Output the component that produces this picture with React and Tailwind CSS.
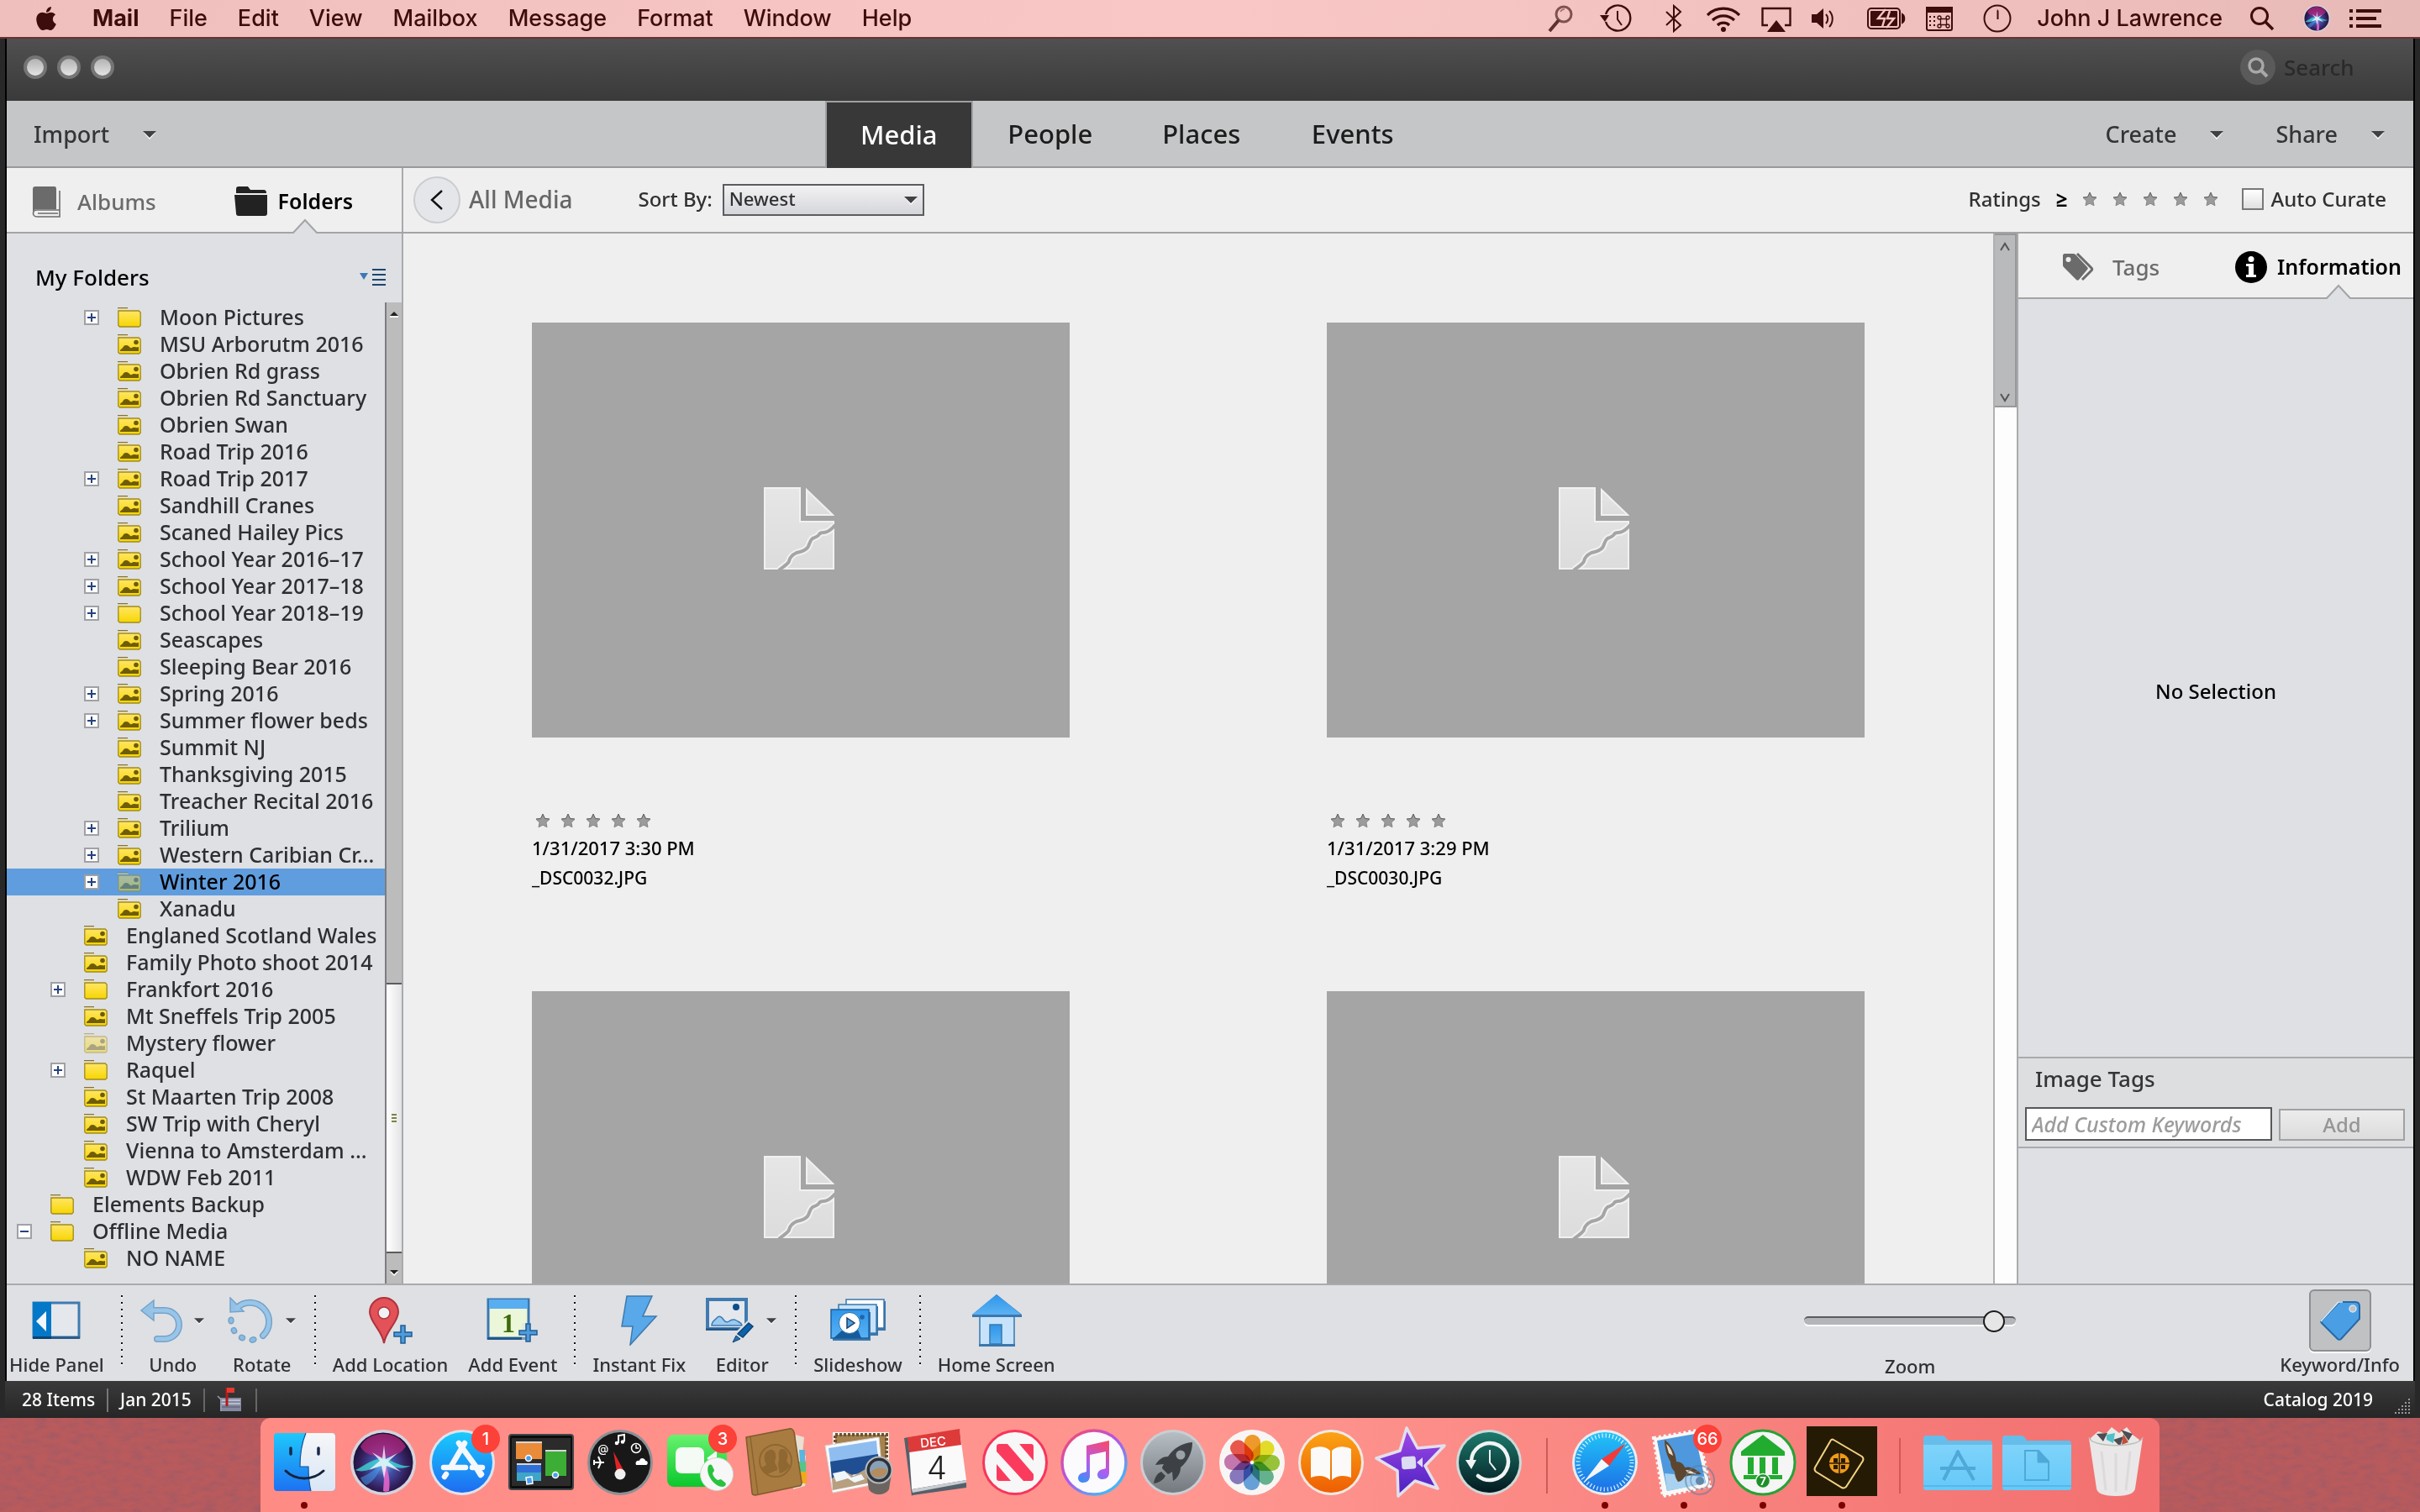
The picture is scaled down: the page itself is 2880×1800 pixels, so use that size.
import React from "react";
import { FaApple } from "react-icons/fa";

const FOLDERS = [
  { name: "Moon Pictures", level: 3, toggle: "+", plain: true },
  { name: "MSU Arborutm 2016", level: 3 },
  { name: "Obrien Rd grass", level: 3 },
  { name: "Obrien Rd Sanctuary", level: 3 },
  { name: "Obrien Swan", level: 3 },
  { name: "Road Trip 2016", level: 3 },
  { name: "Road Trip 2017", level: 3, toggle: "+" },
  { name: "Sandhill Cranes", level: 3 },
  { name: "Scaned Hailey Pics", level: 3 },
  { name: "School Year 2016–17", level: 3, toggle: "+" },
  { name: "School Year 2017–18", level: 3, toggle: "+" },
  { name: "School Year 2018–19", level: 3, toggle: "+", plain: true },
  { name: "Seascapes", level: 3 },
  { name: "Sleeping Bear 2016", level: 3 },
  { name: "Spring 2016", level: 3, toggle: "+" },
  { name: "Summer flower beds", level: 3, toggle: "+" },
  { name: "Summit NJ", level: 3 },
  { name: "Thanksgiving 2015", level: 3 },
  { name: "Treacher Recital 2016", level: 3 },
  { name: "Trilium", level: 3, toggle: "+" },
  { name: "Western Caribian Cr...", level: 3, toggle: "+" },
  { name: "Winter 2016", level: 3, toggle: "+", selected: true, faded: true },
  { name: "Xanadu", level: 3 },
  { name: "Englaned Scotland Wales", level: 2 },
  { name: "Family Photo shoot 2014", level: 2 },
  { name: "Frankfort 2016", level: 2, toggle: "+", plain: true },
  { name: "Mt Sneffels Trip 2005", level: 2 },
  { name: "Mystery flower", level: 2, faded: true },
  { name: "Raquel", level: 2, toggle: "+", plain: true },
  { name: "St Maarten Trip 2008", level: 2 },
  { name: "SW Trip with Cheryl", level: 2 },
  { name: "Vienna to Amsterdam ...", level: 2 },
  { name: "WDW Feb 2011", level: 2 },
  { name: "Elements Backup", level: 1, plain: true },
  { name: "Offline Media", level: 1, toggle: "-", plain: true },
  { name: "NO NAME", level: 2 },
];

const PHOTOS = [
  { id: 1, date: "1/31/2017 3:30 PM", file: "_DSC0032.JPG" },
  { id: 2, date: "1/31/2017 3:29 PM", file: "_DSC0030.JPG" },
  { id: 3 },
  { id: 4 },
];

const INDENT = { 1: "pl-3", 2: "pl-[52px]", 3: "pl-[92px]" };

const MENUS = ["File", "Edit", "View", "Mailbox", "Message", "Format", "Window", "Help"];

/* ---------- small shared drawings ---------- */

const Caret = ({ className = "" }) => (
  <svg viewBox="0 0 16 11" className={`h-[11px] w-4 shrink-0 ${className}`} aria-hidden="true">
    <path d="M1 3h14L8 11z" fill="#fff" />
    <path d="M0 1h16L8 9z" fill="#404142" />
  </svg>
);

const Star = () => (
  <svg viewBox="0 0 18 18" className="h-[18px] w-[18px]" aria-hidden="true">
    <path d="M9 1.5l2.4 5.1 5.6.7-4.1 3.9 1.1 5.6L9 14.1 4 16.8l1.100-5.600L1 7.300l5.600-.7z" fill="#9b9b9b" stroke="#858585" strokeWidth="1" />
    <path d="M9 1l2.400 5.300 5.600.7M1 7l5.600-.7L9 1" fill="none" stroke="#666" strokeWidth="1" />
  </svg>
);

const Notch = ({ className }) => (
  <svg viewBox="0 0 30 18" className={`absolute h-[18px] w-[30px] ${className}`} aria-hidden="true">
    <path d="M0 18L15 2l15 16z" fill="#dee0e4" />
    <path d="M0 17h1L15 2l14 15h1" fill="none" stroke="#a3a4a6" strokeWidth="2" />
  </svg>
);

const FolderIcon = ({ plain, faded }) => (
  <svg viewBox="0 0 28 24" className={`h-6 w-7 shrink-0 ${faded ? "opacity-45" : ""}`} aria-hidden="true">
    <defs>
      <linearGradient id="folderFill" x1="0" y1="0" x2="0" y2="1">
        <stop offset="0" stopColor="#ffe566" />
        <stop offset=".6" stopColor="#fbdd28" />
        <stop offset="1" stopColor="#f5d400" />
      </linearGradient>
    </defs>
    <path d="M0 0h11l2 3H0z" fill="#efe6b8" />
    <path d="M0 .5h12" stroke="#83713a" strokeWidth="1.5" />
    <path d="M.8 4h24.400l2 2v15.500L25.500 23H2.500L.8 21.500z" fill="url(#folderFill)" stroke="#a08a1e" strokeWidth="1.3" />
    {!plain && (
      <g fill="#6f5c08">
        <path d="M3 20c0-3 2-2 3-4 1-2 2-3 4-3 3 0 4 2 5 3 2 1 2-1 4-1 3 0 3 1 6 0v5z" />
        <circle cx="22" cy="9.500" r="2.800" />
      </g>
    )}
  </svg>
);

const Toggle = ({ sign }) => (
  <button type="button" aria-label={sign === "+" ? "Expand" : "Collapse"} className="h-[18px] w-[18px] shrink-0 border-2 border-[#a0a1a4] bg-white">
    <svg viewBox="0 0 14 14" className="h-full w-full">
      <path d={sign === "+" ? "M2 7h10M7 2v10" : "M2 7h10"} stroke="#27427f" strokeWidth="2" />
    </svg>
  </button>
);

/* ---------- mac menu bar ---------- */

const SiriIcon = ({ id, className }) => (
  <svg viewBox="8 8 78 78" className={className} aria-hidden="true">
    <defs>
      <radialGradient id={id} cx=".5" cy=".55" r=".6">
        <stop offset="0" stopColor="#6fb4e8" />
        <stop offset=".3" stopColor="#4450a8" />
        <stop offset=".65" stopColor="#331f5c" />
        <stop offset="1" stopColor="#0d0b26" />
      </radialGradient>
    </defs>
    <circle cx="47" cy="47" r="39" fill="#d5d3dd" />
    <circle cx="47" cy="47" r="35.500" fill={`url(#${id})`} />
    <path d="M20 28c10-20 44-20 54 0-8 12-18 10-27 14-8-4-21-2-27-14z" fill="#c62a86" opacity=".65" />
    <path d="M14 56c12-6 20-14 32-13 12 0 20 10 34 8-12 6-22 0-32 0-12 0-22 10-34 5z" fill="#3fe0d8" opacity=".75" />
    <path d="M46 46c7 8 10 20 8 35-3 1-5 1-7 0 1-14 2-24-1-35z" fill="#f06ad0" opacity=".85" />
    <path d="M45 48c-2 12-10 22-18 26-4-2-6-6-7-9 10-4 18-10 25-17z" fill="#43a6f5" opacity=".5" />
    <path d="M48 26l2 17 14-7-11 10 15 12-17-7-3 15-3-15-15 5 13-11-9-10 12 7z" fill="#fff" opacity=".75" />
  </svg>
);

const MenuBar = () => (
  <header className="flex h-[46px] shrink-0 items-center justify-between border-b-2 border-[#6a3232] bg-gradient-to-r from-[#efbfbd] via-[#f9c8c6] to-[#e8bab7] pr-[46px] pl-10 font-['Inter',sans-serif] text-[27px] text-[#3d0c0c]">
    <nav className="flex items-center gap-9" aria-label="Application menu">
      <FaApple className="mr-1 h-8 w-[30px]" />
      <button type="button" className="font-bold">Mail</button>
      {MENUS.map((m) => (
        <button key={m} type="button">{m}</button>
      ))}
    </nav>
    <div className="flex items-center">
      <svg viewBox="0 0 34 34" className="mr-[30px] h-[34px] w-[34px]" fill="none" stroke="#5c3030">
        <circle cx="21" cy="12" r="9" strokeWidth="3" stroke="#7d5252" />
        <path d="M15 19L4 32" strokeWidth="4" />
        <path d="M17 9c1-2 3-3 5-3" strokeWidth="1.5" stroke="#a06a6a" />
      </svg>
      <svg viewBox="0 0 38 34" className="mr-10 h-[34px] w-[38px]" fill="none" stroke="currentColor" strokeWidth="2.4">
        <path d="M7 21a15 15 0 1 0 0-9" />
        <path d="M21 8v10l5 7" strokeWidth="2" />
        <path d="M0 13h11l-5 8z" fill="currentColor" stroke="none" />
      </svg>
      <svg viewBox="0 0 20 34" className="mr-7 h-[34px] w-5" fill="none" stroke="currentColor" strokeWidth="2">
        <path d="M1 9l17 16-8 7V2l8 7L1 25" />
      </svg>
      <svg viewBox="0 0 42 34" className="mr-6 h-[34px] w-[42px]" fill="none" stroke="currentColor" strokeWidth="3.2">
        <path d="M2 13a27 27 0 0 1 38 0M8 19a19 19 0 0 1 26 0M14 25a10 10 0 0 1 14 0" />
        <circle cx="21" cy="30" r="3" fill="currentColor" stroke="none" />
      </svg>
      <svg viewBox="0 0 36 34" className="mr-6 h-[34px] w-9" fill="none" stroke="currentColor" strokeWidth="2.4">
        <path d="M8 25H1.500V5h33v20H28" />
        <path d="M18 19l11 14H7z" fill="currentColor" stroke="none" />
      </svg>
      <svg viewBox="0 0 26 34" className="mr-10 h-[34px] w-[26px]" fill="none" stroke="currentColor" strokeWidth="2.4">
        <path d="M0 12h6l8-7v24l-8-7H0z" fill="currentColor" stroke="none" />
        <path d="M17 12c3 3 3 8 0 11M21 8c5 5 5 14 0 19" strokeWidth="2" />
      </svg>
      <svg viewBox="0 0 46 34" className="mr-[23px] h-[34px] w-[46px]" fill="none" stroke="currentColor" strokeWidth="2">
        <rect x="1" y="5" width="38" height="24" rx="4" />
        <path d="M42 12c3 2 3 8 0 10z" fill="currentColor" />
        <rect x="4" y="8" width="32" height="18" rx="1" fill="currentColor" stroke="none" />
        <path d="M22 6L13 17h8l-3 10M27 8l-3 9h8l-9 11" stroke="#f6c6c4" strokeWidth="2.4" />
      </svg>
      <svg viewBox="0 0 34 34" className="mr-[35px] h-[34px] w-[34px]" fill="none" stroke="currentColor" strokeWidth="2">
        <rect x="2" y="4" width="30" height="27" rx="2" />
        <path d="M2 4h30v5H2z" fill="currentColor" />
        <path d="M5 15h2M10 15h2M5 20h2M10 20h2M5 25h2M10 25h2" strokeWidth="2" />
        <g strokeWidth="1.3">
          <path d="M18.500 17.500h7v7h-7z" />
          <circle cx="17" cy="16" r="2" />
          <circle cx="27" cy="16" r="2" />
          <circle cx="17" cy="26" r="2" />
          <circle cx="27" cy="26" r="2" />
        </g>
      </svg>
      <svg viewBox="0 0 34 34" className="mr-[30px] h-[34px] w-[34px]" fill="none" stroke="currentColor" strokeWidth="2">
        <circle cx="17" cy="17" r="15.500" />
        <path d="M17 6l1.500 2v10h-2V8z" fill="currentColor" stroke="none" />
      </svg>
      <button type="button" className="mr-8">John J Lawrence</button>
      <svg viewBox="0 0 30 30" className="mr-[34px] h-[30px] w-[30px]" fill="none" stroke="currentColor" strokeWidth="3">
        <circle cx="12" cy="12" r="9.500" />
        <path d="M19 19l9 9" strokeWidth="3.5" />
      </svg>
      <SiriIcon id="menuSiri" className="mr-[23px] h-8 w-8" />
      <svg viewBox="0 0 38 24" className="h-6 w-[38px]" fill="none" stroke="currentColor" strokeWidth="4">
        <path d="M0 3h4M8 3h30M0 12h4M8 12h24M0 21h4M8 21h30" />
      </svg>
    </div>
  </header>
);

/* ---------- window chrome ---------- */

const TitleBar = () => (
  <div className="flex h-[74px] shrink-0 items-center justify-between bg-gradient-to-b from-[#505050] to-[#3a3a3a] pr-8 pb-1.5 pl-5">
    <div className="flex gap-3">
      {["Close", "Minimize", "Zoom window"].map((label) => (
        <button key={label} type="button" aria-label={label} className="h-7 w-7 rounded-full border-4 border-[#757575] bg-gradient-to-b from-[#b3b3b3] to-[#e4e4e4]" />
      ))}
    </div>
    <label className="flex items-center gap-2.5">
      <span className="flex h-[42px] w-[42px] items-center justify-center rounded-full bg-[#5a5a5a]">
        <svg viewBox="0 0 26 26" className="h-[26px] w-[26px]" fill="none" stroke="#a8a8a8" strokeWidth="3.5">
          <circle cx="11" cy="11" r="8" />
          <path d="M17 17l7 7" strokeWidth="4" />
        </svg>
      </span>
      <input type="search" aria-label="Search" placeholder="Search" className="w-[122px] bg-transparent text-[26px] outline-none placeholder:text-[#2a2a2a]" />
    </label>
  </div>
);

const DropButton = ({ children, className }) => (
  <button type="button" className={`flex items-center text-[27px] text-[#343536] ${className}`}>
    {children}
    <Caret />
  </button>
);

const NavBar = () => (
  <div className="flex h-20 shrink-0 border-b-2 border-[#98999a] bg-[#c5c6c8]">
    <div className="flex w-[34%] items-center pt-0.5 pl-8">
      <DropButton className="gap-10">Import</DropButton>
    </div>
    <nav className="flex flex-1 gap-1" aria-label="Views">
      {["Media", "People", "Places", "Events"].map((tab) => (
        <a
          key={tab}
          href={`#${tab.toLowerCase()}`}
          className={`flex w-44 items-center justify-center text-[31px] ${tab === "Media" ? "-mb-0.5 border-2 border-b-0 border-[#a0a1a2] bg-[#383838] pb-0.5 text-white" : "text-[#1c1c1c]"}`}
        >
          {tab}
        </a>
      ))}
    </nav>
    <div className="flex items-center gap-[62px] pt-0.5 pr-[34px]">
      <DropButton className="gap-10">Create</DropButton>
      <DropButton className="gap-10">Share</DropButton>
    </div>
  </div>
);

const FilterBar = () => (
  <div className="flex h-[78px] shrink-0 border-b-2 border-[#a3a4a6] bg-[#efefef]">
    <div className="relative flex w-[472px] shrink-0 items-center justify-between border-r-2 border-[#a9aaac] pt-1 pr-[58px] pl-[30px]">
      <button type="button" className="flex items-center gap-5 text-[26px] text-[#6b6b6b]">
        <svg viewBox="0 0 34 38" className="h-[38px] w-[34px]" aria-hidden="true">
          <path d="M4 1h23c1 0 2 1 2 3v24H6c-3 0-5 2-5 4V4c0-2 1-3 3-3z" fill="#6b6b6b" />
          <path d="M33 6v31H6c-6 0-6-8 0-8h27M7 33h24" fill="none" stroke="#6b6b6b" strokeWidth="1.6" />
        </svg>
        Albums
      </button>
      <button type="button" className="flex items-center gap-3 text-[25px] font-semibold text-black">
        <svg viewBox="0 0 40 36" className="h-9 w-10" fill="#222" aria-hidden="true">
          <path d="M2 8V3c0-2 1-3 3-3h11l3 4h16c2 0 3 1 3 4z" />
          <path d="M0 10h39v22c0 2-1 3-3 3H5c-2 0-3-1-3-3z" />
        </svg>
        Folders
      </button>
      <Notch className="-bottom-0.5 left-[340px]" />
    </div>
    <div className="flex flex-1 items-center justify-between pr-8 pl-3">
      <div className="flex items-center">
        <button type="button" aria-label="Back" className="flex h-14 w-14 items-center justify-center rounded-full border-2 border-[#cbcccf] bg-[#e5e6e9]">
          <svg viewBox="0 0 16 24" className="h-6 w-4" fill="none" stroke="#111" strokeWidth="2.4">
            <path d="M14 1L2 12l12 11" />
          </svg>
        </button>
        <span className="ml-2.5 pb-0.5 text-[28px] text-[#666]">All Media</span>
        <label htmlFor="sort" className="ml-[78px] pb-0.5 text-[24px] text-[#303132]">Sort By:</label>
        <div className="relative ml-3">
          <select id="sort" className="block h-[38px] w-60 appearance-none border-2 border-[#5b5c5f] bg-gradient-to-b from-[#f2f2f4] to-[#d5d6da] pb-1 pl-1.5 text-[22px] leading-[30px] text-[#303132]">
            <option>Newest</option>
            <option>Oldest</option>
          </select>
          <Caret className="pointer-events-none absolute top-3.5 right-2" />
        </div>
      </div>
      <div className="flex items-center pb-0.5 text-[24px] text-[#303132]">
        Ratings
        <span className="mx-[18px] font-bold text-black">≥</span>
        <div className="flex gap-[18px]">
          {[1, 2, 3, 4, 5].map((n) => (
            <button key={n} type="button" aria-label={`${n} stars`}><Star /></button>
          ))}
        </div>
        <label className="ml-7 flex items-center gap-2">
          <input type="checkbox" className="h-[26px] w-[26px] appearance-none border-2 border-[#77787a] bg-gradient-to-b from-white to-[#e0e0e0]" />
          Auto Curate
        </label>
      </div>
    </div>
  </div>
);

/* ---------- panels ---------- */

const Sidebar = () => (
  <aside className="flex w-[472px] shrink-0 flex-col border-r-2 border-[#a9aaac] bg-[#dee0e4]">
    <div className="flex h-[82px] shrink-0 items-center justify-between pt-[22px] pr-[18px] pl-[34px]">
      <h2 className="text-[26px] text-black">My Folders</h2>
      <button type="button" aria-label="Folder options">
        <svg viewBox="0 0 32 22" className="h-[22px] w-8">
          <path d="M0 6h10L5 14z" fill="#3b78b5" />
          <path d="M15 2h16M15 8h16M15 14h16M15 20h16" stroke="#1d4670" strokeWidth="2" />
        </svg>
      </button>
    </div>
    <div className="flex min-h-0 flex-1">
      <ul className="min-w-0 flex-1 overflow-hidden pt-0.5">
        {FOLDERS.map((f) => (
          <li key={f.name} className={`flex h-8 items-center ${INDENT[f.level]} ${f.selected ? "bg-[#609dde] text-black" : "text-[#2d2e30]"}`}>
            {f.toggle ? <Toggle sign={f.toggle} /> : <span className="w-[18px] shrink-0" />}
            <span className="ml-[22px]"><FolderIcon plain={f.plain} faded={f.faded} /></span>
            <span className="ml-[22px] pb-0.5 text-[25px] leading-[30px] whitespace-nowrap">{f.name}</span>
          </li>
        ))}
      </ul>
      <div className="flex w-5 shrink-0 flex-col border-l-2 border-[#7c7d80] bg-[#bcbcbc]">
        <svg viewBox="0 0 18 28" className="h-7 w-[18px]"><path d="M4 16l5-5 5 5z" fill="#222" /><path d="M4 17h10" stroke="#fff" strokeWidth="2" /></svg>
        <div className="flex-1" />
        <div className="flex h-[322px] flex-col items-center justify-center gap-0.5 border-y-2 border-[#5b5c5f] bg-gradient-to-r from-white to-[#e4e4e6]">
          <span className="h-0.5 w-1.5 bg-[#7b8448]" />
          <span className="h-0.5 w-1.5 bg-[#7b8448]" />
          <span className="h-0.5 w-1.5 bg-[#7b8448]" />
        </div>
        <svg viewBox="0 0 18 36" className="h-9 w-[18px]"><path d="M4 22h10l-5 5z" fill="#fff" /><path d="M4 20h10l-5 5z" fill="#222" /></svg>
      </div>
    </div>
  </aside>
);

const BrokenPage = () => (
  <svg viewBox="0 0 84 98" className="mr-1 h-[98px] w-[84px]" aria-hidden="true">
    <defs>
      <linearGradient id="pageFill" x1="0" y1="0" x2="0" y2="1">
        <stop offset="0" stopColor="#e6e6e6" />
        <stop offset="1" stopColor="#dcdcdc" />
      </linearGradient>
    </defs>
    <path d="M1 1h42v40h40v56H1z" fill="url(#pageFill)" stroke="#f1f1f1" strokeWidth="2" />
    <path d="M51 3v30h31z" fill="url(#pageFill)" stroke="#f1f1f1" strokeWidth="2" />
    <path d="M19 98c4-4 10-6 11-10 1-5 5-8 9-10 5-1 10-2 13-6 3-4 2-8 6-11 3-1 6-2 8-5 1-2 3-2 5-2 5 0 9-3 13-8" fill="none" stroke="#f1f1f1" strokeWidth="8" />
    <path d="M18 99c4-4 11-7 12-11 1-5 5-8 9-10 5-1 10-2 13-6 3-4 2-8 6-11 3-1 6-2 8-5 1-2 3-2 5-2 5 0 9-3 14-9" fill="none" stroke="#a5a5a5" strokeWidth="4" />
  </svg>
);

const PhotoCell = ({ photo }) => (
  <article className="flex h-[796px] flex-col items-center">
    <div className="w-[640px]">
      <div className="flex h-[494px] items-center justify-center bg-[#a5a5a5] pb-1">
        <BrokenPage />
      </div>
      {photo.file && (
        <>
          <div className="mt-[84px] flex h-[30px] items-center gap-3 pl-1">
            {[1, 2, 3, 4, 5].map((n) => <Star key={n} />)}
          </div>
          <p className="text-[22px] leading-[34px] text-black">{photo.date}</p>
          <p className="text-[21px] leading-[38px] text-black">{photo.file}</p>
        </>
      )}
    </div>
  </article>
);

const MediaGrid = () => (
  <main className="flex min-w-0 flex-1 bg-[#efefef]">
    <div className="grid flex-1 auto-rows-max grid-cols-2 overflow-hidden pt-[106px]">
      {PHOTOS.map((p) => <PhotoCell key={p.id} photo={p} />)}
    </div>
    <div className="w-7 shrink-0 border-l-2 border-[#b0b1b3] bg-[#fdfdfd]">
      <div className="flex h-[207px] flex-col items-center justify-between border-2 border-l-0 border-[#97989a] bg-[#b9babc] pt-2 pb-1">
        <svg viewBox="0 0 12 12" className="h-3 w-3" fill="none" stroke="#555" strokeWidth="2"><path d="M1 10l5-8 5 8" /></svg>
        <svg viewBox="0 0 12 12" className="h-3 w-3" fill="none" stroke="#555" strokeWidth="2"><path d="M1 2l5 8 5-8" /></svg>
      </div>
    </div>
  </main>
);

const InfoPanel = () => (
  <aside className="flex w-[472px] shrink-0 flex-col border-l-2 border-[#a9aaac] bg-[#dee0e4]">
    <div className="relative flex h-[78px] shrink-0 items-center justify-between border-b-2 border-[#a3a4a6] bg-[#efefef] pt-1 pr-3.5 pl-[52px]">
      <button type="button" className="flex items-center gap-5 text-[26px] text-[#6b6b6b]">
        <svg viewBox="0 0 40 34" className="h-[34px] w-10" aria-hidden="true">
          <path d="M1 3c0-1 1-2 2-2h10c1 0 2 0 3 1l14 15c1 1 1 2 0 3L20 32c-1 1-2 1-3 0L2 17c-1-1-1-2-1-3z" fill="#6b6b6b" />
          <circle cx="7.500" cy="8" r="3" fill="#efefef" />
          <path d="M18 1l17 17c1 1 1 2 0 3L24 32" fill="none" stroke="#6b6b6b" strokeWidth="3" />
        </svg>
        Tags
      </button>
      <button type="button" className="flex items-center gap-3 text-[25px] font-semibold text-black">
        <svg viewBox="0 0 38 38" className="h-[38px] w-[38px]" aria-hidden="true">
          <circle cx="19" cy="19" r="19" />
          <circle cx="19" cy="9.500" r="3.500" fill="#fff" />
          <path d="M13 15h9v13h3v3H13v-3h3V18h-3z" fill="#fff" />
        </svg>
        Information
      </button>
      <Notch className="-bottom-0.5 left-[366px]" />
    </div>
    <div className="flex flex-1 items-center justify-center pt-8 text-[24px] text-black">No Selection</div>
    <section className="h-[109px] shrink-0 border-y-2 border-[#a9aaac] bg-[#dddee0] pr-2.5 pl-2">
      <h3 className="pt-1.5 pl-3 text-[26px] leading-9 text-[#343536]">Image Tags</h3>
      <form className="mt-4 flex items-end gap-2">
        <input type="text" aria-label="Add Custom Keywords" placeholder="Add Custom Keywords" className="h-10 w-[294px] border-2 border-[#565759] bg-white px-1.5 text-[25px] italic outline-none placeholder:text-[#9c9c9c]" />
        <button type="button" className="h-[38px] flex-1 border-2 border-[#a0a1a3] bg-gradient-to-b from-[#ececec] to-[#dcdcdc] text-[24px] leading-8 text-[#959595]">Add</button>
      </form>
    </section>
    <div className="h-[161px] shrink-0" />
  </aside>
);

/* ---------- bottom toolbar ---------- */

const Tool = ({ label, caret, children }) => (
  <button type="button" className="flex min-w-20 flex-col items-center text-[22px] text-[#303132]">
    <span className="flex h-[76px] items-center gap-3">
      {children}
      {caret && <Caret className="scale-75" />}
    </span>
    <span className="leading-7 whitespace-nowrap">{label}</span>
  </button>
);

const Divider = () => (
  <span className="mx-5 mt-2 h-[84px] w-0.5 bg-[repeating-linear-gradient(to_bottom,#111_0_2px,#f4f4f4_2px_4px,transparent_4px_8px)]" />
);

const BlueFill = ({ id }) => (
  <defs>
    <linearGradient id={id} x1="0" y1="0" x2="0" y2="1">
      <stop offset="0" stopColor="#2f95ea" />
      <stop offset="1" stopColor="#5bb2f3" />
    </linearGradient>
  </defs>
);

const SmallPlus = () => (
  <path d="M0 8h8V0h5v8h8v5h-8v8H8v-8H0z" fill="#4e9bdc" stroke="#1f5c94" strokeWidth="1.5" />
);

const BottomBar = () => (
  <footer className="flex h-[116px] shrink-0 justify-between border-t-2 border-[#a9aaac] bg-[#dee0e4] pt-1 pr-4 pl-[3px]">
    <div className="flex items-start">
      <Tool label="Hide Panel">
        <svg viewBox="0 0 58 46" className="h-[46px] w-[58px]">
          <rect x="2" y="2" width="54" height="41" fill="#e4e7ec" stroke="#3f7bb0" strokeWidth="3" />
          <path d="M1 43.500h56" stroke="#2b5c8a" strokeWidth="3" />
          <path d="M1 1h22v44H1z" fill="#0478c8" />
          <path d="M1 43.500h22" stroke="#0a4472" strokeWidth="3" />
          <path d="M17 12v24L5 24z" fill="#f2f8fc" />
        </svg>
      </Tool>
      <Divider />
      <Tool label="Undo" caret>
        <svg viewBox="0 0 50 52" className="h-[52px] w-[50px]" fill="none" strokeLinecap="round">
          <path d="M14 14h15a17 17 0 0 1 0 34h-9" stroke="#74a3cb" strokeWidth="8" />
          <path d="M1 14L16 2v24z" fill="#94c2e6" stroke="#74a3cb" strokeWidth="1.5" />
          <path d="M14 14h15a17 17 0 0 1 0 34h-9" stroke="#99c5e8" strokeWidth="5" />
        </svg>
      </Tool>
      <span className="w-6" />
      <Tool label="Rotate" caret>
        <svg viewBox="0 0 56 56" className="h-14 w-14" fill="none" strokeLinecap="round">
          <path d="M12 13A22.500 22.500 0 1 1 43 46" stroke="#74a3cb" strokeWidth="8" />
          <path d="M4 1v17l16-1z" fill="#94c2e6" stroke="#74a3cb" strokeWidth="1.5" />
          <path d="M12 13A22.500 22.500 0 1 1 43 46" stroke="#99c5e8" strokeWidth="5" />
          <g fill="#8ebbe0" stroke="#74a3cb" strokeWidth="1.5">
            <ellipse cx="5" cy="28" rx="3" ry="3.800" />
            <ellipse cx="8.500" cy="40" rx="3" ry="3.500" transform="rotate(-25 8.500 40)" />
            <ellipse cx="18" cy="48.500" rx="3.500" ry="3" transform="rotate(25 18 48.500)" />
            <ellipse cx="31" cy="51" rx="4" ry="3" transform="rotate(-20 31 51)" />
          </g>
        </svg>
      </Tool>
      <Divider />
      <Tool label="Add Location">
        <svg viewBox="0 0 54 56" className="h-14 w-[54px]">
          <path d="M19 55C17 40 2 30 2 18a17 17 0 0 1 34 0c0 12-15 22-17 37z" fill="#e25258" stroke="#b0333a" strokeWidth="2" />
          <circle cx="19" cy="19" r="7" fill="#eef2f6" stroke="#b5353b" strokeWidth="1.5" />
          <g transform="translate(31 34)"><SmallPlus /></g>
        </svg>
      </Tool>
      <span className="w-6" />
      <Tool label="Add Event">
        <svg viewBox="0 0 62 54" className="h-[54px] w-[62px]">
          <rect x="2" y="2" width="48" height="46" fill="#ecf6d8" stroke="#3a78b0" strokeWidth="3" />
          <path d="M3 2h46v11H3z" fill="#58aef0" />
          <path d="M1 48.500h48" stroke="#24588a" strokeWidth="3" />
          <text x="26" y="41" textAnchor="middle" fontSize="32" fontWeight="700" fill="#3c6b08" fontFamily="Liberation Serif, serif">1</text>
          <path d="M42 30h19v23H42z" fill="#dee0e4" opacity=".5" />
          <g transform="translate(39 31)"><SmallPlus /></g>
        </svg>
      </Tool>
      <Divider />
      <Tool label="Instant Fix">
        <svg viewBox="0 0 44 60" className="h-[60px] w-11">
          <path d="M7 1h30L26 25h16L11 59l3-22H1z" fill="#58a8ea" stroke="#3c79ae" strokeWidth="1.5" />
        </svg>
      </Tool>
      <span className="w-6" />
      <Tool label="Editor" caret>
        <svg viewBox="0 0 58 54" className="h-[54px] w-[58px]">
          <rect x="2" y="2" width="46" height="35" fill="#e4e7ec" stroke="#3f7bb0" strokeWidth="4" />
          <path d="M0 37.500h50" stroke="#1f4f80" strokeWidth="2" />
          <path d="M7 33c0-6 4-6 7-10 3-2 5 0 7 3s5 4 8 1c4-2 6-1 9 1 4 2 5 3 5 5z" fill="#9ccbf0" stroke="#3f7bb0" strokeWidth="1.5" />
          <circle cx="36" cy="11" r="4" fill="#0a4f8c" />
          <path d="M50 27l8 5-18 21-11 2 3-11z" fill="#dee0e4" />
          <path d="M51 30l5 4-12 13-6-4z" fill="#0d62ad" stroke="#0b4274" strokeWidth="1.5" />
          <path d="M36 45l5 4-9 4z" fill="#2a6fb0" stroke="#0b4274" />
        </svg>
      </Tool>
      <Divider />
      <Tool label="Slideshow">
        <svg viewBox="0 0 68 54" className="h-[54px] w-[68px]">
          <BlueFill id="slideFill" />
          <path d="M22 4h45v35H22z" fill="#3a77ad" />
          <rect x="20" y="2" width="45" height="34" fill="#fff" stroke="#3a77ad" strokeWidth="1.5" />
          <path d="M13 10h45v35H13z" fill="#3a77ad" />
          <rect x="11" y="8" width="45" height="34" fill="#c6e3fb" stroke="#3a77ad" strokeWidth="1.5" />
          <path d="M4 17h45v34H4z" fill="#3a77ad" />
          <rect x="2" y="14" width="45" height="34" fill="url(#slideFill)" stroke="#1c609f" strokeWidth="1.5" />
          <path d="M5 48l11-10h18l4 10z" fill="#165c9b" />
          <circle cx="24" cy="30" r="12.500" fill="#fff" stroke="#2a6fab" strokeWidth="1" />
          <path d="M21 24l9 6-9 6z" fill="#4ba0e4" stroke="#1f3f63" strokeWidth="1.5" />
          <circle cx="39" cy="23" r="2.800" fill="#1f66a8" />
        </svg>
      </Tool>
      <Divider />
      <Tool label="Home Screen">
        <svg viewBox="0 0 62 64" className="h-16 w-[62px]">
          <BlueFill id="homeFill" />
          <path d="M11 27h41v35H11z" fill="#c6e3fb" stroke="#3a77ad" strokeWidth="1.5" />
          <path d="M10 61.500h43" stroke="#3a77ad" strokeWidth="3" />
          <path d="M31 1l30 24v3H2v-3z" fill="#3a77ad" />
          <path d="M31 1l29 24H2z" fill="url(#homeFill)" />
          <path d="M23 37h14v23H23z" fill="url(#homeFill)" stroke="#3a77ad" strokeWidth="1.5" />
        </svg>
      </Tool>
    </div>
    <div className="flex items-start gap-[314px]">
      <div className="flex w-[252px] flex-col items-center text-[22px] text-[#303132]">
        <span className="flex h-[76px] w-full items-center">
          <input
            id="zoom"
            type="range"
            defaultValue="94"
            className="h-[26px] w-full appearance-none bg-transparent [&::-webkit-slider-runnable-track]:h-2.5 [&::-webkit-slider-runnable-track]:rounded-full [&::-webkit-slider-runnable-track]:border-t-2 [&::-webkit-slider-runnable-track]:border-[#5a5b5e] [&::-webkit-slider-runnable-track]:bg-[#b4b5b8] [&::-webkit-slider-runnable-track]:shadow-[0_2px_0_#fff] [&::-webkit-slider-thumb]:-mt-[9px] [&::-webkit-slider-thumb]:h-[26px] [&::-webkit-slider-thumb]:w-[26px] [&::-webkit-slider-thumb]:appearance-none [&::-webkit-slider-thumb]:rounded-full [&::-webkit-slider-thumb]:border-2 [&::-webkit-slider-thumb]:border-[#1c1c1c] [&::-webkit-slider-thumb]:bg-[#e6e6e6]"
          />
        </span>
        <label htmlFor="zoom" className="pt-0.5 leading-7">Zoom</label>
      </div>
      <Tool label="Keyword/Info">
        <span className="flex h-[74px] w-[74px] items-center justify-center rounded-md border-2 border-[#8e8f92] bg-[#c0c1c3] shadow-[0_2px_0_#fff]">
          <svg viewBox="0 0 50 50" className="h-[50px] w-[50px]">
            <path d="M24 3h19c3 0 5 2 5 5v15L26 47c-1 1-3 1-4 0L3 28c-1-1-1-2 0-3z" fill="#4a9fe4" stroke="#2469a8" strokeWidth="2" />
            <path d="M2 26L23 3h5" fill="none" stroke="#e6eef5" strokeWidth="1.5" />
            <circle cx="40" cy="11" r="4" fill="#c0c1c3" stroke="#cfe4f5" strokeWidth="1.5" />
          </svg>
        </span>
      </Tool>
    </div>
  </footer>
);

const StatusBar = () => (
  <div className="flex h-11 shrink-0 items-center justify-between bg-gradient-to-b from-[#3a3a3a] to-[#262626] pt-0.5 pr-1 pl-5 text-[21px] text-white">
    <div className="flex items-center gap-3.5">
      <span>28 Items</span>
      <span className="h-7 w-0.5 bg-[#777]" />
      <span>Jan 2015</span>
      <span className="h-7 w-0.5 bg-[#666]" />
      <svg viewBox="0 0 32 30" className="h-[30px] w-8">
        <path d="M4 12h25v16H4z" fill="#8488a0" />
        <path d="M6 15h22M6 19h22" stroke="#b9bccb" strokeWidth="2" />
        <path d="M6 23h22" stroke="#6d7086" strokeWidth="2" />
        <path d="M1 10l4 4v14" fill="none" stroke="#9a9db0" strokeWidth="1.5" />
        <path d="M12 0v22" stroke="#b31b1b" strokeWidth="3" />
        <path d="M12 0h9v6h-9z" fill="#e8392e" />
      </svg>
      <span className="h-7 w-0.5 bg-[#666]" />
    </div>
    <div className="flex items-end gap-[26px]">
      <span>Catalog 2019</span>
      <svg viewBox="0 0 20 20" className="h-5 w-5" stroke="#999" strokeWidth="2" strokeDasharray="2 2">
        <path d="M0 19h20M4 15h16M8 11h12M12 7h8M16 3h4" />
      </svg>
    </div>
  </div>
);

/* ---------- dock ---------- */

const FinderIcon = () => (
  <>
    <defs>
      <linearGradient id="finderL" x1="0" y1="0" x2="0" y2="1"><stop offset="0" stopColor="#1ec8fb" /><stop offset="1" stopColor="#1d72f2" /></linearGradient>
      <linearGradient id="finderR" x1="0" y1="0" x2="0" y2="1"><stop offset="0" stopColor="#f6f6f8" /><stop offset="1" stopColor="#d8e6f6" /></linearGradient>
    </defs>
    <rect x="11" y="12" width="73" height="69" rx="4" fill="url(#finderL)" />
    <path d="M49 12h31c3 0 4 2 4 4v61c0 3-2 4-4 4H55c-2-8-3-16-3-29H42c0-14 2-28 7-40z" fill="url(#finderR)" />
    <path d="M49 12c-5 12-7 26-7 40h10c0 13 1 21 3 29" fill="none" stroke="#16519a" strokeWidth="1.2" />
    <path d="M31 30v7M64 30v7" stroke="#182848" strokeWidth="3.5" strokeLinecap="round" />
    <path d="M25 57c12 12 32 12 45 0" fill="none" stroke="#16233b" strokeWidth="3" strokeLinecap="round" />
  </>
);

const SiriDock = () => (
  <svg x="8" y="8" width="78" height="78">
    <SiriIcon id="dockSiri" className="h-[78px] w-[78px]" />
  </svg>
);

const AppStoreIcon = () => (
  <>
    <defs><linearGradient id="storeFill" x1="0" y1="0" x2="0" y2="1"><stop offset="0" stopColor="#19cbfd" /><stop offset="1" stopColor="#1e6cf1" /></linearGradient></defs>
    <circle cx="47" cy="47" r="39" fill="#dfe4ea" />
    <circle cx="47" cy="47" r="36" fill="url(#storeFill)" />
    <g stroke="#f4f7fb" strokeWidth="6.5" strokeLinecap="round">
      <path d="M50 24L33 53M43 24l27 37M25 53h26M59 53h12M28 61l-2 3M61 49l8 13" />
    </g>
  </>
);

const MissionIcon = () => (
  <>
    <rect x="9" y="14" width="76" height="65" rx="3" fill="#0d0d0d" stroke="#43464b" strokeWidth="2" />
    <path d="M12 18h70v57H12z" fill="#2b2b2b" />
    <rect x="17" y="23" width="31" height="20" fill="#e98b38" />
    <path d="M17 23h31" stroke="#d7d7d7" strokeWidth="2" />
    <rect x="52" y="33" width="25" height="30" fill="#3cae36" />
    <path d="M52 33h25" stroke="#d7d7d7" strokeWidth="2" />
    <rect x="18" y="49" width="29" height="20" fill="#2f6fd8" />
    <path d="M18 59h29v10H18z" fill="#3fa5c8" />
    <path d="M18 49h29" stroke="#d7d7d7" strokeWidth="2" />
    <g fill="#4a9ff0" stroke="#fff" strokeWidth="1.5">
      <circle cx="32" cy="42" r="3.500" />
      <circle cx="64" cy="62" r="3.500" />
      <path d="M29 65l7-1 1 8-7 1z" />
    </g>
  </>
);

const DashboardIcon = () => (
  <>
    <circle cx="47" cy="47" r="39" fill="#8c9094" />
    <circle cx="47" cy="47" r="36" fill="#181818" />
    <path d="M39 34l13 24h-9z" fill="#e02424" />
    <circle cx="47" cy="61" r="6.500" fill="#f0f0f0" />
    <g fill="none" stroke="#fff" strokeWidth="1.5">
      <circle cx="66" cy="30" r="5.500" />
      <path d="M66 26v4h3" />
      <path d="M45 24v-9l7-1v8" strokeWidth="2" />
      <path d="M15 47h13M21 40l3 7-3 7M16 44v6" strokeWidth="2" />
    </g>
    <circle cx="43" cy="24" r="2.300" fill="#fff" />
    <circle cx="50" cy="22.500" r="2.300" fill="#fff" />
    <path d="M66 50c-2-5 3-6 4-5 1-5 7-3 7 0 4 0 3 5 1 5z" fill="#fff" />
    <text x="27" y="35" fill="#fff" fontSize="13" textAnchor="middle" fontFamily="Inter, sans-serif">@</text>
  </>
);

const FaceTimeIcon = () => (
  <>
    <defs><linearGradient id="ftFill" x1="0" y1="0" x2="0" y2="1"><stop offset="0" stopColor="#67f26f" /><stop offset="1" stopColor="#0bc72c" /></linearGradient></defs>
    <rect x="9" y="14" width="71" height="62" rx="8" fill="url(#ftFill)" />
    <rect x="19" y="29" width="34" height="31" rx="7" fill="#f4fbf4" />
    <path d="M56 42l12-9v20z" fill="#f4fbf4" />
    <circle cx="68" cy="61" r="19.500" fill="#f7f7f7" stroke="#d0d6d0" />
    <path d="M58 51c2-2 4-2 5 1l2 4c0 2-2 3-2 4 1 4 3 6 6 8l4-1 5 4c2 2 0 5-3 5-9 0-21-14-17-25z" fill="#28c43f" />
  </>
);

const ContactsIcon = () => (
  <>
    <path d="M68 14l10 3-2 20 4 2-2 20 3 3-2 13-14 4z" fill="#e8e0d2" />
    <path d="M72 32h7v14h-6z" fill="#58b6e0" />
    <path d="M72 46h8v12h-7z" fill="#57c48a" />
    <path d="M74 58h7v14h-7z" fill="#f0a81e" />
    <path d="M9 17L60 7c3-1 5 1 6 4l9 60c0 2-1 4-3 4l-52 11c-2 0-4-1-4-3z" fill="#a87c40" stroke="#80592a" strokeWidth="1.5" />
    <path d="M14 17l9 68" stroke="#8a6430" strokeWidth="1.5" />
    <circle cx="44" cy="45" r="19" fill="none" stroke="#8f6731" strokeWidth="2" />
    <path d="M37 32c7-2 9 8 6 14 0 4 4 5 3 10l-12 5c-3-2-5-4-7-7 1-2 5-2 6-5-4-6-3-15 4-17zM51 31c7-1 9 8 6 14 1 3 3 3 4 6-3 5-6 7-12 9-1-5-2-8-2-12 3-5-2-15 4-17z" fill="#8f6731" />
  </>
);

const PreviewIcon = () => (
  <>
    <path d="M18 11h67v50H18z" fill="#f4f4f2" />
    <path d="M21 14h61v46H21z" fill="#a5824e" />
    <path d="M21 14h61v46H21z" fill="none" stroke="#6d5230" strokeWidth="4" strokeDasharray="3 2" />
    <path d="M9 27l64-10 5 54-60 12z" fill="#fafafa" stroke="#d6d6d6" />
    <path d="M13 30l57-9 2 23-56 9z" fill="#8fbdf0" />
    <path d="M15 46l57-9 2 18-57 12z" fill="#1f4f92" />
    <path d="M17 66l14-9 12 6 14-8 16-2 1 16-56 11z" fill="#b79f80" />
    <path d="M18 60l14-3 8 8 12-4 4 6-12 4-8-5-14 4" fill="#eef6fb" />
    <path d="M58 60h30l-3 19c-5 8-19 8-24 0z" fill="#6a6561" />
    <circle cx="73" cy="56" r="15.500" fill="#2d3135" stroke="#b5b9bd" strokeWidth="2" />
    <circle cx="73" cy="56" r="11" fill="#8aa0b6" />
    <path d="M63 59c4-6 16-8 20-2-2 8-14 12-20 2z" fill="#b58c5e" />
  </>
);

const CalendarIcon = () => (
  <>
    <path d="M9 18l5-1 69 52v8l-64 9-1 1z" fill="#54606a" />
    <path d="M14 17l61-9 8 60-65 11z" fill="#fafafa" />
    <path d="M13 17l62-10 2 19-62 9z" fill="#dd3a3a" />
    <path d="M18 79l65-11v3l-64 12z" fill="#c9ccd0" />
    <text x="44" y="28" fill="#fff" fontSize="15" textAnchor="middle" transform="rotate(-6 44 28)" fontFamily="Inter, sans-serif">DEC</text>
    <text x="48" y="67" fill="#1e1e1e" fontSize="38" fontWeight="300" textAnchor="middle" fontFamily="Inter, sans-serif">4</text>
  </>
);

const NewsIcon = () => (
  <>
    <circle cx="47" cy="47" r="37.500" fill="#f7f7f8" stroke="#f8355a" strokeWidth="3" />
    <clipPath id="newsClip"><rect x="25" y="25" width="44" height="44" rx="3" /></clipPath>
    <g clipPath="url(#newsClip)" fill="#fb3b5d">
      <path d="M25 25h13l31 36v8H57L25 34z" />
      <path d="M52 25h17v20zM25 49v20h17z" />
    </g>
  </>
);

const ITunesIcon = () => (
  <>
    <defs>
      <linearGradient id="tuneRing" x1="0" y1="0" x2=".8" y2="1"><stop offset="0" stopColor="#fb4a5e" /><stop offset=".5" stopColor="#b455e8" /><stop offset="1" stopColor="#36c4f8" /></linearGradient>
      <linearGradient id="tuneNote" gradientUnits="userSpaceOnUse" x1="60" y1="20" x2="35" y2="70"><stop offset="0" stopColor="#fb4768" /><stop offset=".6" stopColor="#b25bf0" /><stop offset="1" stopColor="#3f8ef5" /></linearGradient>
    </defs>
    <circle cx="47" cy="47" r="38" fill="#fbfafc" stroke="url(#tuneRing)" strokeWidth="3.5" />
    <path d="M38 27l27-6v38c0 5-3 8-8 8-8 0-8-11 1-12l3-1V34l-19 4v25c0 5-3 8-8 8-8 0-8-11 1-12l3-1z" fill="url(#tuneNote)" />
  </>
);

const LaunchpadIcon = () => (
  <>
    <defs><linearGradient id="padFill" x1="0" y1="0" x2="0" y2="1"><stop offset="0" stopColor="#b6bec4" /><stop offset="1" stopColor="#74797e" /></linearGradient></defs>
    <circle cx="47" cy="47" r="39" fill="#c9ced3" />
    <circle cx="47" cy="47" r="36" fill="url(#padFill)" />
    <path d="M70 23c-13 1-22 7-29 17-6 0-11 3-15 10l10-1c-1 2-2 3-2 5l7 7c2-1 4-2 5-3l1 11c6-4 9-10 9-16 9-8 14-18 14-30z" fill="#3d4145" />
    <circle cx="56" cy="38" r="5.500" fill="#9aa1a7" />
    <path d="M33 58c-5 2-8 7-9 14 7-1 11-4 14-9z" fill="#3d4145" />
  </>
);

const PETALS = ["#f5a02c", "#e9e329", "#9bca3c", "#66b893", "#6aa6e0", "#8a7cc4", "#c97bb4", "#ee5a4e"];

const PhotosIcon = () => (
  <>
    <circle cx="47" cy="47" r="39" fill="#f8f6f4" />
    {PETALS.map((c, i) => (
      <rect key={c} x="38" y="14" width="19" height="31" rx="9" fill={c} className="mix-blend-multiply" transform={`rotate(${i * 45} 47 47)`} />
    ))}
  </>
);

const BooksIcon = () => (
  <>
    <defs><linearGradient id="bookFill" x1="0" y1="0" x2="0" y2="1"><stop offset="0" stopColor="#fba314" /><stop offset="1" stopColor="#ee5e04" /></linearGradient></defs>
    <circle cx="47" cy="47" r="39" fill="#efe9e4" />
    <circle cx="47" cy="47" r="36" fill="url(#bookFill)" />
    <path d="M46 33c-5-6-16-6-23-2v34c8-3 17-3 23 3zM48 33c5-6 16-6 23-2v34c-8-3-17-3-23 3z" fill="#fbfaf8" />
  </>
);

const MovieIcon = () => (
  <>
    <defs><linearGradient id="starFill" x1="0" y1="0" x2="0" y2="1"><stop offset="0" stopColor="#a34be8" /><stop offset="1" stopColor="#4a1fc0" /></linearGradient></defs>
    <path d="M43 6l13 24 32-3-23 24 15 27-27-9-20 18-1-30L7 42l28-9z" fill="url(#starFill)" stroke="#e3dfec" strokeWidth="3.5" strokeLinejoin="round" />
    <rect x="37" y="40" width="17" height="15" rx="3" fill="#dcdcf2" transform="rotate(-4 45 47)" />
    <path d="M55 47l7-6v12z" fill="#dcdcf2" />
  </>
);

const TimeMachineIcon = () => (
  <>
    <defs><linearGradient id="tmFill" x1="0" y1="0" x2="0" y2="1"><stop offset="0" stopColor="#1c7a6c" /><stop offset="1" stopColor="#031a20" /></linearGradient></defs>
    <circle cx="47" cy="47" r="39" fill="#cfd8d8" />
    <circle cx="47" cy="47" r="36" fill="url(#tmFill)" />
    <path d="M26 45a22 22 0 1 1 8 18" fill="none" stroke="#f0f4f4" strokeWidth="4.5" strokeLinecap="round" />
    <path d="M19 44h13l-6 11z" fill="#f0f4f4" />
    <path d="M48 32v15l7 9" fill="none" stroke="#f0f4f4" strokeWidth="2" />
  </>
);

const SafariIcon = () => (
  <>
    <defs><linearGradient id="safariFill" x1="0" y1="0" x2="0" y2="1"><stop offset="0" stopColor="#21c4f8" /><stop offset="1" stopColor="#1c6ee6" /></linearGradient></defs>
    <circle cx="47" cy="47" r="39" fill="#e8ecf0" />
    <circle cx="47" cy="47" r="36" fill="url(#safariFill)" />
    <circle cx="47" cy="47" r="32" fill="none" stroke="#dff2fc" strokeWidth="5" strokeDasharray="1.2 3" />
    <path d="M72 24L52 51l-9-8z" fill="#f23b36" />
    <path d="M22 70l21-27 9 8z" fill="#f4f6f8" />
  </>
);

const MailIcon = () => (
  <>
    <path d="M11 18l52-9 15 66-56 12z" fill="#f8f8f6" stroke="#f8f8f6" strokeWidth="4" strokeDasharray="3 3" />
    <path d="M15 21l45-8 13 58-46 10z" fill="#4f98dd" />
    <path d="M24 60l47 4 2 8-46 9z" fill="#a8d2f0" />
    <path d="M24 20c7 5 13 14 14 26 5 0 9 3 10 7 7-2 14 2 20 8-8 0-15 1-20 3-2 3-5 6-8 6-3-4-4-8-4-12-4-4-5-8-5-12-4-6-7-16-7-26z" fill="#5d4630" />
    <path d="M26 25c4 3 7 8 8 14l-5-3zM49 56c5 0 9 2 13 5l-10-1z" fill="#e8dcc8" />
    <circle cx="66" cy="68" r="17" fill="none" stroke="#5c7a9a" strokeWidth="2" opacity=".55" />
    <circle cx="66" cy="68" r="11" fill="none" stroke="#5c7a9a" strokeWidth="1.5" opacity=".55" />
    <circle cx="66" cy="69" r="5" fill="#47658a" opacity=".7" />
  </>
);

const BankIcon = () => (
  <>
    <circle cx="47" cy="47" r="38" fill="#f4f5f4" stroke="#25a335" strokeWidth="3" />
    <path d="M47 14l26 20v5H21v-5z" fill="#22ac2f" />
    <path d="M29 41h7v20h-7zM43 41h7v20h-7zM58 41h7v20h-7zM24 62h46v5H24z" fill="#22ac2f" />
    <circle cx="47" cy="69" r="8.500" fill="#1d9029" stroke="#eef3ee" strokeWidth="1.5" />
    <text x="47" y="74" fill="#fff" fontSize="13" fontWeight="700" textAnchor="middle" fontFamily="Inter, sans-serif">7</text>
  </>
);

const ElementsIcon = () => (
  <>
    <path d="M5 4h84v83H5z" fill="#251a04" />
    <path d="M37 20l34 20c2 2 2 3 1 5L52 76c-2 2-3 2-5 1L16 58c-2-2-2-3-1-5l18-31c1-2 2-3 4-2z" fill="none" stroke="#f1d383" strokeWidth="2" />
    <circle cx="44" cy="48" r="12" fill="#f09a1a" />
    <path d="M44 36v24M32 48h24" stroke="#251a04" strokeWidth="1.5" />
    <path d="M37 42h5v5h-5zM46 42h5v5h-5zM37 50h5v5h-5zM46 50h5v5h-5z" fill="#251a04" />
  </>
);

const DockFolder = ({ id, children }) => (
  <>
    <defs><linearGradient id={id} x1="0" y1="0" x2="0" y2="1"><stop offset="0" stopColor="#7ed3fa" /><stop offset="1" stopColor="#66c8f8" /></linearGradient></defs>
    <path d="M6 19c0-3 1-4 4-4h19c2 0 4 2 6 6h49c3 0 4 1 4 4v20H6z" fill="#67bde9" />
    <path d="M6 26h82v51c0 2-1 3-3 3H9c-2 0-3-1-3-3z" fill={`url(#${id})`} />
    <path d="M6 75h82" stroke="#4fb2e4" strokeWidth="1.5" />
    <g fill="none" stroke="#4ea9d8" strokeWidth="4">{children}</g>
  </>
);

const TrashIcon = () => (
  <>
    <path d="M17 18L26 10l9 3 7-8 9 7 9-7 7 9 8 6-6 12H20z" fill="#e8e8e6" />
    <path d="M24 13l8 9 5-10zM53 8l9 13 5-8zM44 20l8 8 4-12z" fill="#4a4d52" />
    <path d="M36 14l10-2-2 12-8-4z" fill="#4fc0c8" />
    <path d="M56 13l6 10-8 3z" fill="#c25038" />
    <path d="M15 18l9 60c1 6 9 9 23 9s22-3 23-9l9-60c-6 12-58 12-64 0z" fill="#e9e7e7" />
    <path d="M15 17c2 13 62 13 64 0" fill="none" stroke="#bdbdbd" strokeWidth="1.5" />
    <path d="M30 34l5 46M64 34l-5 46M47 36v46" stroke="#dcdada" strokeWidth="3" />
  </>
);

const DockItem = ({ label, badge, running, children }) => (
  <a href="#dock" aria-label={label} className="relative block h-[106px] w-[94px] pt-1.5">
    <svg viewBox="0 0 94 94" className="h-[94px] w-[94px]" aria-hidden="true">{children}</svg>
    {badge && (
      <span className="absolute top-2 right-0.5 flex h-[34px] w-[34px] items-center justify-center rounded-full bg-[#fc4138] font-['Inter',sans-serif] text-[20px] leading-none text-white">{badge}</span>
    )}
    {running && <span className="absolute -bottom-0.5 left-[43px] h-2 w-2 rounded-full bg-[#7d0000]" />}
  </a>
);

const DockLine = () => <span className="mx-[21px] mt-6 h-[66px] w-0.5 bg-[#cf5a58]" />;

const Dock = () => (
  <div className="relative flex h-28 shrink-0 justify-center bg-[#b95a5c]">
    {/* fabric grain of the desktop */}
    <svg className="absolute inset-0 h-full w-full" aria-hidden="true">
      <filter id="grain">
        <feTurbulence type="fractalNoise" baseFrequency=".07 .16" numOctaves="3" seed="4" />
        <feColorMatrix values="0 0 0 0 .35  0 0 0 0 .1  0 0 0 0 .13  1.6 0 0 0 -.6" />
      </filter>
      <rect width="100%" height="100%" filter="url(#grain)" />
    </svg>
    <div className="relative flex rounded-t-xl bg-gradient-to-r from-[#ff8b85] via-[#ff9690] to-[#f2706f] px-[5px]">
      <DockItem label="Finder" running><FinderIcon /></DockItem>
      <DockItem label="Siri"><SiriDock /></DockItem>
      <DockItem label="App Store" badge="1"><AppStoreIcon /></DockItem>
      <DockItem label="Mission Control"><MissionIcon /></DockItem>
      <DockItem label="Dashboard"><DashboardIcon /></DockItem>
      <DockItem label="FaceTime" badge="3"><FaceTimeIcon /></DockItem>
      <DockItem label="Contacts"><ContactsIcon /></DockItem>
      <DockItem label="Preview"><PreviewIcon /></DockItem>
      <DockItem label="Calendar"><CalendarIcon /></DockItem>
      <DockItem label="News"><NewsIcon /></DockItem>
      <DockItem label="iTunes"><ITunesIcon /></DockItem>
      <DockItem label="Launchpad"><LaunchpadIcon /></DockItem>
      <DockItem label="Photos"><PhotosIcon /></DockItem>
      <DockItem label="Books"><BooksIcon /></DockItem>
      <DockItem label="iMovie"><MovieIcon /></DockItem>
      <DockItem label="Time Machine"><TimeMachineIcon /></DockItem>
      <DockLine />
      <DockItem label="Safari" running><SafariIcon /></DockItem>
      <DockItem label="Mail" badge="66" running><MailIcon /></DockItem>
      <DockItem label="Banktivity" running><BankIcon /></DockItem>
      <DockItem label="Elements Organizer" running><ElementsIcon /></DockItem>
      <DockLine />
      <DockItem label="Applications">
        <DockFolder id="dockApps"><path d="M48 33L30 68M46 33l20 35M26 54h42" /></DockFolder>
      </DockItem>
      <DockItem label="Documents">
        <DockFolder id="dockDocs"><path d="M33 33h16l12 13v22H33z" strokeWidth="2" /><path d="M48 33v14h13z" fill="#4ea9d8" strokeWidth="1" /></DockFolder>
      </DockItem>
      <DockItem label="Trash"><TrashIcon /></DockItem>
    </div>
  </div>
);

export default function App() {
  return (
    <div className="flex h-screen flex-col overflow-hidden bg-[#282828] font-['Noto_Sans','Open_Sans',sans-serif] font-medium">
      <MenuBar />
      <div className="flex min-h-0 flex-1 flex-col px-1.5">
        <div className="flex min-h-0 flex-1 flex-col border-x-2 border-black">
          <TitleBar />
          <NavBar />
          <FilterBar />
          <div className="flex min-h-0 flex-1">
            <Sidebar />
            <MediaGrid />
            <InfoPanel />
          </div>
          <BottomBar />
        </div>
        <StatusBar />
      </div>
      <Dock />
    </div>
  );
}
